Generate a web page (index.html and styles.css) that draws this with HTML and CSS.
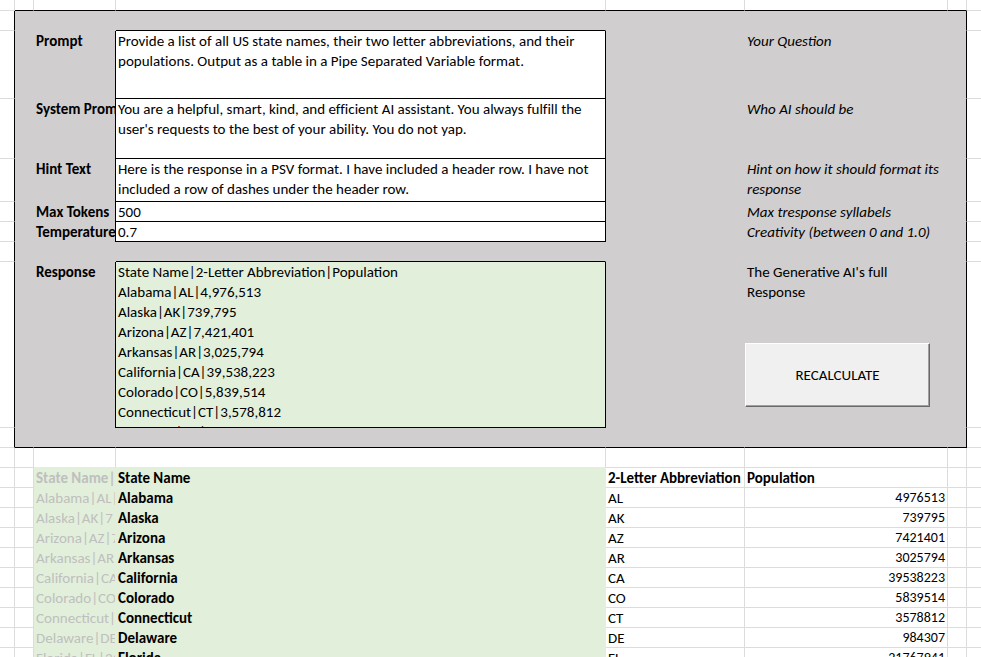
FILE: index.html
```html
<!DOCTYPE html>
<html lang="en">
<head>
<meta charset="utf-8">
<title>Generative AI Worksheet</title>
<link rel="stylesheet" href="styles.css">
</head>
<body>
<main class="sheet">
  <div class="row row-top"><i></i><i></i><i></i><i></i><i></i><i></i><i></i><i></i></div>

  <form class="panel">
    <div class="row row-before-box"><i></i><i></i><i></i><i class="box-top"></i><i></i><i></i><i></i><i></i></div>
    <div class="row row-field prompt">
      <i></i><i></i>
      <label for="prompt">Prompt</label>
      <textarea id="prompt">Provide a list of all US state names, their two letter abbreviations, and their populations. Output as a table in a Pipe Separated Variable format.</textarea>
      <i></i><p class="note">Your Question</p><i></i><i></i>
    </div>
    <div class="row row-field system">
      <i></i><i></i>
      <label for="system">System Prompt</label>
      <textarea id="system">You are a helpful, smart, kind, and efficient AI assistant. You always fulfill the user's requests to the best of your ability. You do not yap.</textarea>
      <i></i><p class="note">Who AI should be</p><i></i><i></i>
    </div>
    <div class="row row-field hint">
      <i></i><i></i>
      <label for="hint">Hint Text</label>
      <textarea id="hint">Here is the response in a PSV format. I have included a header row. I have not included a row of dashes under the header row.</textarea>
      <i></i><p class="note">Hint on how it should format its response</p><i></i><i></i>
    </div>
    <div class="row row-field">
      <i></i><i></i>
      <label for="tokens">Max Tokens</label>
      <input id="tokens" type="text" value="500">
      <i></i><p class="note">Max tresponse syllabels</p><i></i><i></i>
    </div>
    <div class="row row-field">
      <i></i><i></i>
      <label for="temperature">Temperature</label>
      <input id="temperature" type="text" value="0.7">
      <i></i><p class="note">Creativity (between 0 and 1.0)</p><i></i><i></i>
    </div>
    <div class="row row-before-box"><i></i><i></i><i></i><i class="box-top"></i><i></i><i></i><i></i><i></i></div>
    <div class="row row-field response">
      <i></i><i></i>
      <label for="response">Response</label>
      <textarea id="response" readonly>State Name|2-Letter Abbreviation|Population
Alabama|AL|4,976,513
Alaska|AK|739,795
Arizona|AZ|7,421,401
Arkansas|AR|3,025,794
California|CA|39,538,223
Colorado|CO|5,839,514
Connecticut|CT|3,578,812
Delaware|DE|984,307</textarea>
      <i></i>
      <div class="actions">
        <p>The Generative AI's full Response</p>
        <button type="button">RECALCULATE</button>
      </div>
      <i></i><i></i>
    </div>
    <div class="row row-end"><i></i><i></i><i></i><i></i><i></i><i></i><i></i><i></i></div>
  </form>

  <div class="row row-gap"><i></i><i></i><i></i><i></i><i></i><i></i><i></i><i></i></div>

  <table class="states">
    <colgroup><col class="c-edge"><col class="c-thin"><col class="c-raw"><col><col class="c-abbr"><col class="c-pop"><col class="c-thin"><col class="c-last"></colgroup>
    <thead>
      <tr><td></td><td></td><th class="raw">State Name|</th><th class="name">State Name</th><th>2-Letter Abbreviation</th><th>Population</th><td></td><td></td></tr>
    </thead>
    <tbody>
      <tr><td></td><td></td><td class="raw">Alabama|AL|</td><th class="name">Alabama</th><td>AL</td><td class="num">4976513</td><td></td><td></td></tr>
      <tr><td></td><td></td><td class="raw">Alaska|AK|7</td><th class="name">Alaska</th><td>AK</td><td class="num">739795</td><td></td><td></td></tr>
      <tr><td></td><td></td><td class="raw">Arizona|AZ|7</td><th class="name">Arizona</th><td>AZ</td><td class="num">7421401</td><td></td><td></td></tr>
      <tr><td></td><td></td><td class="raw">Arkansas|AR</td><th class="name">Arkansas</th><td>AR</td><td class="num">3025794</td><td></td><td></td></tr>
      <tr><td></td><td></td><td class="raw">California|CA</td><th class="name">California</th><td>CA</td><td class="num">39538223</td><td></td><td></td></tr>
      <tr><td></td><td></td><td class="raw">Colorado|CO</td><th class="name">Colorado</th><td>CO</td><td class="num">5839514</td><td></td><td></td></tr>
      <tr><td></td><td></td><td class="raw">Connecticut|</td><th class="name">Connecticut</th><td>CT</td><td class="num">3578812</td><td></td><td></td></tr>
      <tr><td></td><td></td><td class="raw">Delaware|DE</td><th class="name">Delaware</th><td>DE</td><td class="num">984307</td><td></td><td></td></tr>
      <tr><td></td><td></td><td class="raw">Florida|FL|21</td><th class="name">Florida</th><td>FL</td><td class="num">21767941</td><td></td><td></td></tr>
    </tbody>
  </table>
</main>
</body>
</html>
```
FILE: styles.css
```css
:root {
  --line: #dcdcdc;
  --ink: #000;
  --panel: #d0cece;
  --green: #e2efda;
}

* {
  box-sizing: border-box;
}

body {
  margin: 0;
  background: #fff;
  color: var(--ink);
  font-family: Carlito, Lato, sans-serif;
  font-size: 15px;
  line-height: 20px;
}

.sheet {
  height: 100vh;
  overflow: hidden;
}

.row {
  display: grid;
  grid-template-columns: 15px 19px 82px minmax(0, 1fr) 139px 203px 19px 14px;
  min-height: 20px;
}

.row > i {
  border-right: 1px solid var(--line);
  border-bottom: 1px solid var(--line);
}

.row > i:last-child {
  border-right: 0;
}

.row-top {
  min-height: 11px;
}

.row-top > i:not(:first-child, :last-child) {
  border-bottom-color: var(--ink);
}

.row-gap > i:nth-child(3),
.row-gap > i:nth-child(4) {
  border-bottom-color: var(--green);
}

/* Grey form area: gridlines show only in the outer columns */
.panel > .row > :not(:first-child, :last-child) {
  background-color: var(--panel);
}

.panel > .row > i:not(:first-child, :last-child) {
  border-color: var(--panel);
}

.panel > .row > i:first-child,
.panel > .row > i:nth-last-child(2):nth-child(7) {
  border-right-color: var(--ink);
}

.panel > .row > i.box-top:nth-child(4),
.panel > .row-end > i:not(:first-child, :last-child) {
  border-bottom-color: var(--ink);
}

label {
  padding-left: 2px;
  border-right: 1px solid var(--ink);
  font-weight: 700;
  white-space: nowrap;
  overflow: hidden;
}

p {
  margin: 0;
}

.note {
  padding: 0 3px 0 2px;
  font-style: italic;
}

textarea,
input {
  display: block;
  width: 100%;
  height: 100%;
  margin: 0;
  padding: 0 2px;
  border: 0 solid var(--ink);
  border-width: 0 1px 1px 0;
  border-radius: 0;
  outline: 0;
  resize: none;
  overflow: hidden;
  color: inherit;
  font: inherit;
  font-variant-ligatures: none;
}

textarea[readonly] {
  font-variant-ligatures: normal;
}

.panel > .row > textarea:nth-child(4),
.panel > .row > input:nth-child(4) {
  background-color: #fff;
}

.panel > .row > textarea[readonly]:nth-child(4) {
  background-color: var(--green);
}

.row > input {
  height: 20px;
  padding-top: 1px;
}

.row-field {
  grid-template-rows: minmax(0, 1fr);
}

.prompt {
  height: 68px;
}

.system {
  height: 60px;
}

.hint {
  height: 43px;
}

.response {
  height: 166px;
}

.actions {
  display: flex;
  flex-direction: column;
  justify-content: space-between;
  padding: 0 18px 21px 0;
}

.actions p {
  padding: 0 20px 0 2px;
}

button {
  height: 64px;
  padding: 0;
  border: 1px solid;
  border-color: #fff #696969 #696969 #fff;
  box-shadow: inset -1px -1px #a0a0a0;
  background: #f0f0f0;
  color: inherit;
  font: inherit;
}

.states {
  width: 100%;
  table-layout: fixed;
  border-collapse: separate;
  border-spacing: 0;
}

.c-edge { width: 15px; }
.c-thin { width: 19px; }
.c-raw { width: 82px; }
.c-abbr { width: 139px; }
.c-pop { width: 203px; }
.c-last { width: 14px; }

.states th,
.states td {
  height: 20px;
  padding: 1px 2px 0;
  border-right: 1px solid var(--line);
  border-bottom: 1px solid var(--line);
  line-height: 18px;
  text-align: left;
  white-space: nowrap;
  overflow: hidden;
}

.states td:last-child {
  border-right: 0;
}

.states .raw,
.states .name {
  border-color: var(--green);
  background: var(--green);
}

.states .raw {
  padding-right: 0;
  color: #bfbfbf;
}

.states .num {
  font-size: 14px;
  text-align: right;
}
```
